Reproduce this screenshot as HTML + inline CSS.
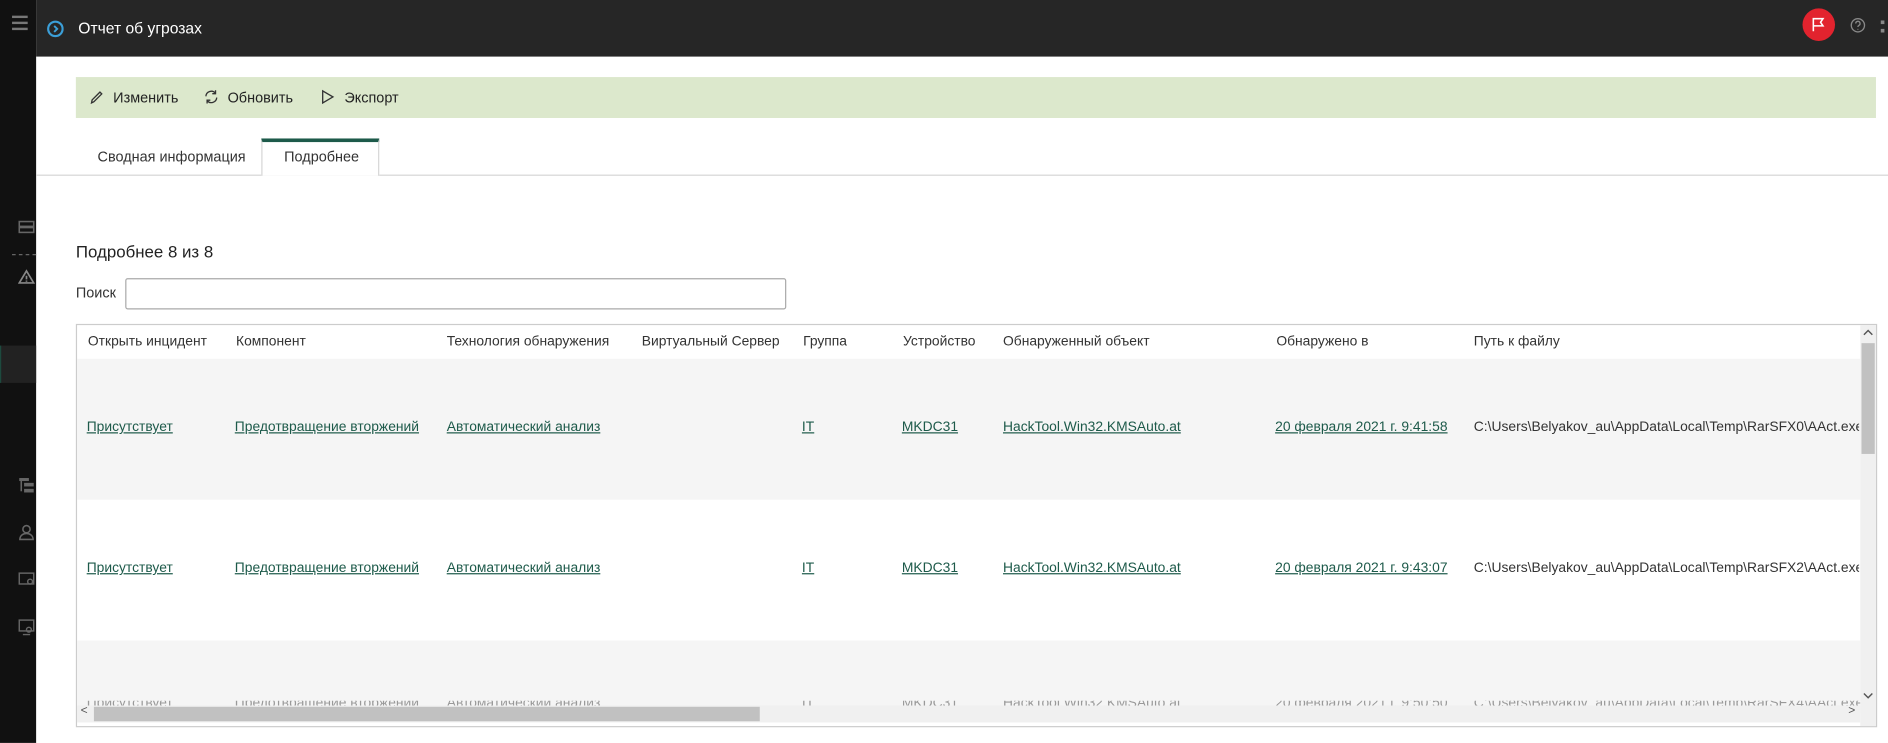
<!DOCTYPE html>
<html><head><meta charset="utf-8">
<style>
*{box-sizing:border-box;margin:0;padding:0}
html,body{width:1888px;height:743px;overflow:hidden;background:#fff}
#w{position:absolute;left:0;top:0;width:1568px;height:617px;transform:scale(1.20408);transform-origin:0 0;font-family:"Liberation Sans","DejaVu Sans",sans-serif;color:#333}
.abs{position:absolute}
#side{left:0;top:0;width:30px;height:617px;background:#111}
#top{left:30px;top:0;width:1538px;height:47px;background:#262626}
.title{left:65px;top:16px;color:#fff;font-size:13px}
#tb{left:63px;top:64px;width:1495px;height:34px;background:#dce8cc}
.tbi{top:74px;font-size:12px;color:#222}
.tab{font-size:12px;color:#333}
.link{color:#1d5a4a;text-decoration:underline;font-size:11.5px;position:absolute;white-space:nowrap}
.hd{position:absolute;top:278px;font-size:11.5px;color:#333;white-space:nowrap}
.txt{position:absolute;font-size:11.5px;color:#333;white-space:nowrap}
</style></head><body><div id="w">
<div id="side" class="abs"></div>
<div class="abs" style="left:10px;top:13px;width:13px;height:2px;background:#777"></div>
<div class="abs" style="left:10px;top:18px;width:13px;height:2px;background:#777"></div>
<div class="abs" style="left:10px;top:23px;width:13px;height:2px;background:#777"></div>
<svg class="abs" style="left:15px;top:182px" width="14" height="14" viewBox="0 0 14 14" fill="none" stroke="#666" stroke-width="1.3"><rect x="1" y="2" width="12" height="4"/><rect x="1" y="7" width="12" height="4"/></svg>
<div class="abs" style="left:10px;top:211px;width:20px;border-top:1px dashed #666"></div>
<svg class="abs" style="left:15px;top:223px" width="14" height="14" viewBox="0 0 14 14" fill="none" stroke="#888" stroke-width="1.4"><path d="M7 2L13 12H1Z"/><path d="M7 6v3M7 10v1"/></svg>
<div class="abs" style="left:0;top:287px;width:30px;height:31px;background:#222;border-left:1px solid #1d4a3e"></div>
<svg class="abs" style="left:15px;top:396px" width="14" height="14" viewBox="0 0 14 14" fill="#666"><rect x="1" y="1" width="8" height="2.5"/><rect x="5" y="5" width="8" height="3"/><rect x="5" y="10" width="8" height="3"/><rect x="2" y="3" width="1.3" height="9"/></svg>
<svg class="abs" style="left:15px;top:435px" width="14" height="14" viewBox="0 0 14 14" fill="none" stroke="#666" stroke-width="1.3"><circle cx="7" cy="4.5" r="3"/><path d="M1.5 13c0-3 2.5-5 5.5-5s5.5 2 5.5 5Z"/></svg>
<svg class="abs" style="left:15px;top:474px" width="14" height="14" viewBox="0 0 14 14" fill="none" stroke="#666" stroke-width="1.2"><rect x="1" y="2" width="12" height="9"/><circle cx="10" cy="9" r="2"/></svg>
<svg class="abs" style="left:15px;top:514px" width="14" height="14" viewBox="0 0 14 14" fill="none" stroke="#666" stroke-width="1.2"><rect x="1" y="1" width="12" height="9"/><path d="M4 13h6"/><circle cx="9" cy="9" r="2"/></svg>

<div id="top" class="abs"></div>
<svg class="abs" style="left:39px;top:17px" width="14" height="14" viewBox="0 0 14 14"><circle cx="7" cy="7" r="6" fill="none" stroke="#3b9fd8" stroke-width="1.8"/><path d="M6 4.5L8.5 7L6 9.5" fill="none" stroke="#3b9fd8" stroke-width="1.6"/></svg>
<div class="abs title">Отчет об угрозах</div>
<div class="abs" style="left:1497px;top:7px;width:27px;height:27px;border-radius:50%;background:#e2232e"></div>
<svg class="abs" style="left:1504px;top:14px" width="13" height="13" viewBox="0 0 13 13" fill="none" stroke="#fff" stroke-width="1.3"><path d="M2 12V1.5h8L8 4.5l2 3H2"/></svg>
<svg class="abs" style="left:1536px;top:14px" width="14" height="14" viewBox="0 0 14 14" fill="none" stroke="#888" stroke-width="1.1"><circle cx="7" cy="7" r="5.5"/><path d="M5.2 5.5a1.8 1.8 0 1 1 2.6 1.6c-.6.3-.8.7-.8 1.3M7 10v.6"/></svg>
<div class="abs" style="left:1562px;top:17px;width:3px;height:3px;background:#888"></div>
<div class="abs" style="left:1562px;top:24px;width:3px;height:3px;background:#888"></div>

<div id="tb" class="abs"></div>
<svg class="abs" style="left:74px;top:75px" width="12" height="12" viewBox="0 0 12 12" fill="none" stroke="#333" stroke-width="1.1"><path d="M2 10.5l.5-2.5L9 1.5l1.5 1.5L4 9.5Z"/></svg>
<div class="abs tbi" style="left:94px">Изменить</div>
<svg class="abs" style="left:169px;top:74px" width="13" height="13" viewBox="0 0 13 13" fill="none" stroke="#333" stroke-width="1.1"><path d="M2 6a4.5 4.5 0 0 1 8-2.5M11 7a4.5 4.5 0 0 1-8 2.5"/><path d="M10 1v2.8H7.3M3 12V9.2h2.7"/></svg>
<div class="abs tbi" style="left:189px">Обновить</div>
<svg class="abs" style="left:266px;top:74px" width="12" height="13" viewBox="0 0 12 13" fill="none" stroke="#333" stroke-width="1.1"><path d="M2 1.5v10l8.5-5Z"/></svg>
<div class="abs tbi" style="left:286px">Экспорт</div>

<div class="abs tab" style="left:81px;top:123px">Сводная информация</div>
<div class="abs" style="left:30px;top:145px;width:1538px;height:1px;background:#d6d6d6"></div>
<div class="abs" style="left:217px;top:115px;width:98px;height:31px;background:#fff;border:1px solid #d6d6d6;border-top:3px solid #1d5a4a;border-bottom:none"></div>
<div class="abs tab" style="left:236px;top:123px">Подробнее</div>

<div class="abs" style="left:63px;top:201px;font-size:14px;color:#222">Подробнее 8 из 8</div>
<div class="abs" style="left:63px;top:236px;font-size:12px">Поиск</div>
<div class="abs" style="left:104px;top:231px;width:549px;height:26px;border:1px solid #aaa;border-radius:2px"></div>

<div class="abs" style="left:63px;top:269px;width:1496px;height:335px;border:1px solid #ccc;overflow:hidden">
 <div class="abs" style="left:0;top:28px;width:1481px;height:117px;background:#f5f5f5"></div>
 <div class="abs" style="left:0;top:262px;width:1481px;height:60px;background:#f5f5f5"></div>
</div>
<div class="hd" style="left:73px">Открыть инцидент</div>
<div class="hd" style="left:196px">Компонент</div>
<div class="hd" style="left:371px">Технология обнаружения</div>
<div class="hd" style="left:533px">Виртуальный Сервер</div>
<div class="hd" style="left:667px">Группа</div>
<div class="hd" style="left:750px">Устройство</div>
<div class="hd" style="left:833px">Обнаруженный объект</div>
<div class="hd" style="left:1060px">Обнаружено в</div>
<div class="hd" style="left:1224px">Путь к файлу</div>

<div class="link" style="left:72px;top:349px">Присутствует</div>
<div class="link" style="left:195px;top:349px">Предотвращение вторжений</div>
<div class="link" style="left:371px;top:349px">Автоматический анализ</div>
<div class="link" style="left:666px;top:349px">IT</div>
<div class="link" style="left:749px;top:349px">MKDC31</div>
<div class="link" style="left:833px;top:349px">HackTool.Win32.KMSAuto.at</div>
<div class="link" style="left:1059px;top:349px">20 февраля 2021 г. 9:41:58</div>
<div class="abs" style="left:1224px;top:349px;width:320px;overflow:hidden"><div class="txt" style="position:static">C:\Users\Belyakov_au\AppData\Local\Temp\RarSFX0\AAct.exe</div></div>

<div class="link" style="left:72px;top:466px">Присутствует</div>
<div class="link" style="left:195px;top:466px">Предотвращение вторжений</div>
<div class="link" style="left:371px;top:466px">Автоматический анализ</div>
<div class="link" style="left:666px;top:466px">IT</div>
<div class="link" style="left:749px;top:466px">MKDC31</div>
<div class="link" style="left:833px;top:466px">HackTool.Win32.KMSAuto.at</div>
<div class="link" style="left:1059px;top:466px">20 февраля 2021 г. 9:43:07</div>
<div class="abs" style="left:1224px;top:466px;width:320px;overflow:hidden"><div class="txt" style="position:static">C:\Users\Belyakov_au\AppData\Local\Temp\RarSFX2\AAct.exe</div></div>

<div class="abs" style="left:64px;top:582px;width:1481px;height:4px;overflow:hidden;color:#999;font-size:11.5px">
 <span class="abs" style="left:8px;top:-4px">Присутствует</span><span class="abs" style="left:131px;top:-4px">Предотвращение вторжений</span><span class="abs" style="left:307px;top:-4px">Автоматический анализ</span><span class="abs" style="left:602px;top:-4px">IT</span><span class="abs" style="left:685px;top:-4px">MKDC31</span><span class="abs" style="left:769px;top:-4px">HackTool.Win32.KMSAuto.at</span><span class="abs" style="left:995px;top:-4px">20 февраля 2021 г. 9:50:50</span><span class="abs" style="left:1160px;top:-4px">C:\Users\Belyakov_au\AppData\Local\Temp\RarSFX4\AAct.exe</span>
</div>

<div class="abs" style="left:64px;top:586px;width:1481px;height:14px;background:#f0f0f0"></div>
<div class="abs" style="left:78px;top:587px;width:553px;height:12px;background:#c1c1c1"></div>
<div class="abs" style="left:67px;top:585px;font-size:10px;color:#555">&lt;</div>
<div class="abs" style="left:1535px;top:585px;font-size:10px;color:#555">&gt;</div>
<div class="abs" style="left:1545px;top:270px;width:13px;height:333px;background:#f0f0f0"></div>
<div class="abs" style="left:1546px;top:285px;width:11px;height:92px;background:#c1c1c1"></div>
<svg class="abs" style="left:1547px;top:273px" width="9" height="6" viewBox="0 0 9 6" fill="none" stroke="#555" stroke-width="1.2"><path d="M1 5L4.5 1.5L8 5"/></svg>
<svg class="abs" style="left:1547px;top:575px" width="9" height="6" viewBox="0 0 9 6" fill="none" stroke="#555" stroke-width="1.2"><path d="M1 1L4.5 4.5L8 1"/></svg>
</div></body></html>
